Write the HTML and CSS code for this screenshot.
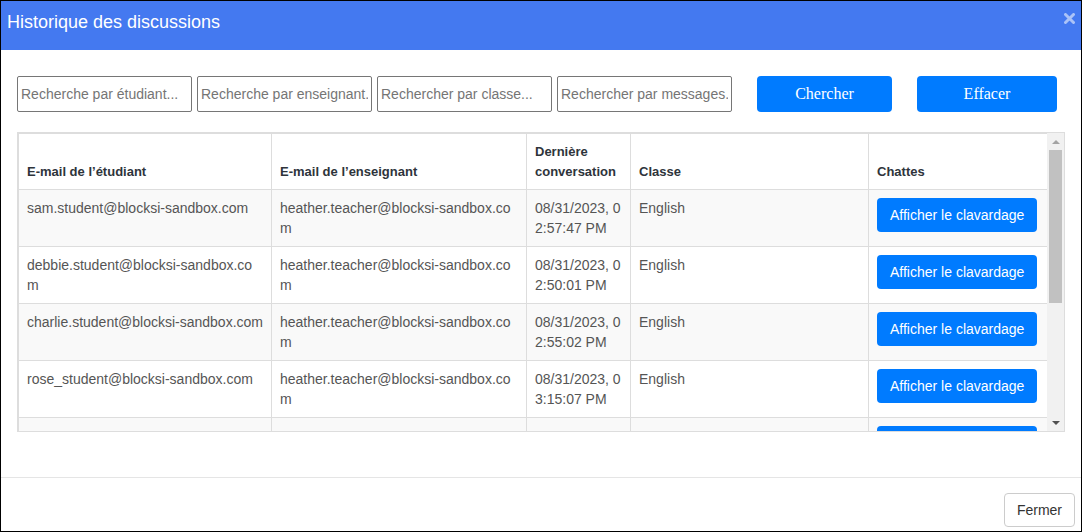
FILE: index.html
```html
<!DOCTYPE html>
<html lang="fr">
<head>
    <meta charset="UTF-8">
    <meta name="viewport" content="width=device-width, initial-scale=1.0">
    <title>Historique des discussions</title>
    <link rel="stylesheet" href="styles.css">
</head>
<body>
    <div class="modal">
        <div class="modal-header">
            <h4 class="modal-title">Historique des discussions</h4>
            <button class="close-btn" aria-label="Fermer">
                <svg width="11" height="11" viewBox="0 0 11 11">
                    <path d="M1.5 1.5 L9.5 9.5 M9.5 1.5 L1.5 9.5" stroke="#abc3f7" stroke-width="3" stroke-linecap="round"/>
                </svg>
            </button>
        </div>

        <div class="modal-body">
            <div class="search-row">
                <input type="text" class="search-input" placeholder="Recherche par étudiant...">
                <input type="text" class="search-input" placeholder="Recherche par enseignant...">
                <input type="text" class="search-input" placeholder="Rechercher par classe...">
                <input type="text" class="search-input" placeholder="Rechercher par messages...">
                <button class="btn-primary search-btn">Chercher</button>
                <button class="btn-primary clear-btn">Effacer</button>
            </div>

            <div class="table-wrap">
                <div class="table-scroll">
                    <table class="chat-table">
                        <colgroup>
                            <col style="width: 253px">
                            <col style="width: 255px">
                            <col style="width: 104px">
                            <col style="width: 238px">
                            <col style="width: 179px">
                        </colgroup>
                        <thead>
                            <tr>
                                <th>E-mail de l’étudiant</th>
                                <th>E-mail de l’enseignant</th>
                                <th>Dernière conversation</th>
                                <th>Classe</th>
                                <th>Chattes</th>
                            </tr>
                        </thead>
                        <tbody>
                            <tr>
                                <td>sam.student@blocksi-sandbox.com</td>
                                <td>heather.teacher@blocksi-sandbox.com</td>
                                <td>08/31/2023, 02:57:47 PM</td>
                                <td>English</td>
                                <td><button class="btn-primary view-btn">Afficher le clavardage</button></td>
                            </tr>
                            <tr>
                                <td>debbie.student@blocksi-sandbox.com</td>
                                <td>heather.teacher@blocksi-sandbox.com</td>
                                <td>08/31/2023, 02:50:01 PM</td>
                                <td>English</td>
                                <td><button class="btn-primary view-btn">Afficher le clavardage</button></td>
                            </tr>
                            <tr>
                                <td>charlie.student@blocksi-sandbox.com</td>
                                <td>heather.teacher@blocksi-sandbox.com</td>
                                <td>08/31/2023, 02:55:02 PM</td>
                                <td>English</td>
                                <td><button class="btn-primary view-btn">Afficher le clavardage</button></td>
                            </tr>
                            <tr>
                                <td>rose_student@blocksi-sandbox.com</td>
                                <td>heather.teacher@blocksi-sandbox.com</td>
                                <td>08/31/2023, 03:15:07 PM</td>
                                <td>English</td>
                                <td><button class="btn-primary view-btn">Afficher le clavardage</button></td>
                            </tr>
                            <tr class="row-empty">
                                <td></td>
                                <td></td>
                                <td></td>
                                <td></td>
                                <td><button class="btn-primary view-btn" aria-label="Afficher le clavardage"></button></td>
                            </tr>
                        </tbody>
                    </table>
                </div>
                <div class="scrollbar">
                    <div class="sb-arrow"><span class="tri-up"></span></div>
                    <div class="sb-track"><div class="sb-thumb"></div></div>
                    <div class="sb-arrow"><span class="tri-down"></span></div>
                </div>
            </div>
        </div>

        <div class="modal-footer">
            <button class="btn-default">Fermer</button>
        </div>
    </div>
</body>
</html>
```

FILE: styles.css
```css
* {
    box-sizing: border-box;
}
body {
    margin: 0;
    font-family: "Liberation Sans", Arial, sans-serif;
    background-color: #fff;
}
.modal {
    width: 1082px;
    height: 532px;
    border: 1px solid #000;
    display: flex;
    flex-direction: column;
    background-color: #fff;
}
.modal-header {
    height: 49px;
    background-color: #4479f0;
    display: flex;
    justify-content: space-between;
    align-items: flex-start;
    padding: 10px 6px 0 6px;
}
.modal-title {
    margin: 0;
    color: #fff;
    font-size: 18px;
    font-weight: normal;
    line-height: 22px;
}
.close-btn {
    border: none;
    background: none;
    padding: 0;
    margin-top: 2px;
    width: 11px;
    height: 11px;
    display: block;
}
.close-btn svg {
    display: block;
}
.modal-body {
    flex: 1;
    padding: 26px 16px 0 16px;
}
.search-row {
    display: flex;
    align-items: center;
    height: 36px;
}
.search-input {
    width: 175px;
    height: 36px;
    margin-right: 5px;
    padding: 0 3px;
    border: 1px solid #767676;
    border-radius: 2px;
    font-family: "Liberation Sans", Arial, sans-serif;
    font-size: 14px;
    color: #333;
}
.search-input::placeholder {
    color: #757575;
}
.btn-primary {
    background-color: #007bff;
    color: #fff;
    border: none;
    border-radius: 4px;
    cursor: pointer;
}
.search-btn,
.clear-btn {
    height: 36px;
    font-family: "Liberation Serif", "Times New Roman", serif;
    font-size: 16px;
}
.search-btn {
    width: 135px;
    margin-left: 20px;
}
.clear-btn {
    width: 140px;
    margin-left: 25px;
}
.table-wrap {
    margin-top: 20px;
    height: 300px;
    width: 1048px;
    border: 1px solid #ddd;
    display: flex;
}
.table-scroll {
    flex: 1;
    overflow: hidden;
}
.chat-table {
    width: 1029px;
    border-collapse: collapse;
    table-layout: fixed;
    font-size: 14px;
    line-height: 20px;
}
.chat-table th,
.chat-table td {
    border: 1px solid #ddd;
    padding: 8px;
    text-align: left;
}
.chat-table th {
    vertical-align: bottom;
    padding-bottom: 7px;
    font-size: 13px;
    font-weight: bold;
    color: #2e343b;
    background-color: #fff;
}
.chat-table td {
    vertical-align: top;
    color: #555;
    word-break: break-all;
}
.chat-table tbody tr:nth-child(odd) td {
    background-color: #f9f9f9;
}
.row-empty td {
    height: 57px;
}
.view-btn {
    height: 34px;
    padding: 0 13px;
    font-family: "Liberation Sans", Arial, sans-serif;
    font-size: 14px;
    white-space: nowrap;
    word-break: normal;
}
.row-empty .view-btn {
    width: 160px;
}
.scrollbar {
    width: 17px;
    background-color: #f1f1f1;
    display: flex;
    flex-direction: column;
}
.sb-arrow {
    height: 17px;
    display: flex;
    align-items: center;
    justify-content: center;
}
.tri-up {
    width: 0;
    height: 0;
    border-left: 4px solid transparent;
    border-right: 4px solid transparent;
    border-bottom: 4px solid #a3a3a3;
}
.tri-down {
    width: 0;
    height: 0;
    border-left: 4px solid transparent;
    border-right: 4px solid transparent;
    border-top: 4px solid #505050;
}
.sb-track {
    flex: 1;
    padding: 0 2px;
}
.sb-thumb {
    height: 153px;
    background-color: #c1c1c1;
}
.modal-footer {
    height: 54px;
    border-top: 1px solid #e5e5e5;
    display: flex;
    justify-content: flex-end;
    align-items: flex-start;
    padding: 15px 6px 0 0;
}
.btn-default {
    height: 34px;
    padding: 0 12px;
    background-color: #fff;
    color: #333;
    border: 1px solid #ccc;
    border-radius: 4px;
    font-family: "Liberation Sans", Arial, sans-serif;
    font-size: 14px;
}
```
